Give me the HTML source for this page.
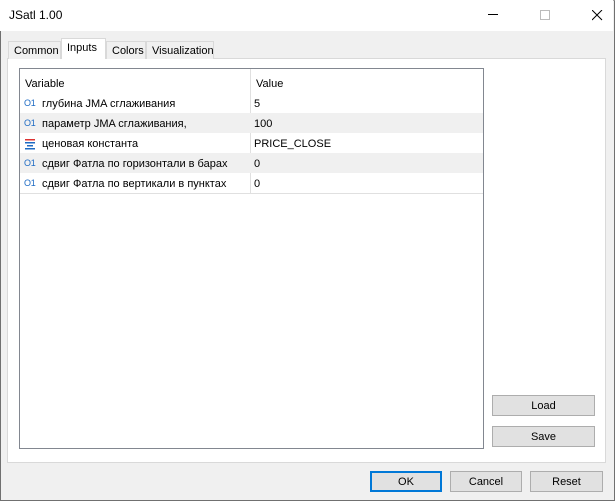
<!DOCTYPE html>
<html><head><meta charset="utf-8"><style>
*{margin:0;padding:0;box-sizing:border-box}
body{width:615px;height:501px;overflow:hidden;background:#f0f0f0;font-family:"Liberation Sans","Noto Sans CJK SC",sans-serif;font-size:11px;color:#000;position:relative}
.win{position:absolute;left:0;top:0;width:615px;height:501px;border:1px solid #707070;border-top:1px solid #aaa}
.title{position:absolute;left:0;top:0;width:613px;height:31px;background:#fff}
.title span{position:absolute;left:9px;top:8px;font-size:12px}
.abs{position:absolute}
.tab{position:absolute;top:41px;height:18px;border:1px solid #d9d9d9;border-bottom:none;background:#f0f0f0;padding:3px 5px 0;font-size:11px}
.panel{position:absolute;left:7px;top:58px;width:599px;height:405px;background:#fff;border:1px solid #d9d9d9}
.tbl{position:absolute;left:19px;top:68px;width:465px;height:381px;border:1px solid #828790;background:#fff}
.row{position:absolute;left:0;width:463px;height:20px}
.row.g{background:#f0f0f0}
.c1{position:absolute;left:22px;top:5px;white-space:nowrap}
.c2{position:absolute;left:234px;top:5px}
.ic{position:absolute;left:4px;top:5px;color:#1e6bc4;font-size:9px;letter-spacing:-.3px}
.vline{position:absolute;left:230px;top:0;width:1px;height:124px;background:#e0e0e0}
.btn{position:absolute;height:21px;background:#e1e1e1;border:1px solid #adadad;text-align:center;line-height:21px;font-size:11px}
</style></head><body>
<div class="win"></div>
<div class="title"><span>JSatl 1.00</span>
<div class="abs" style="left:488px;top:14px;width:10px;height:1px;background:#000"></div>
<div class="abs" style="left:540px;top:10px;width:10px;height:10px;border:1px solid #bbb"></div>
<svg class="abs" style="left:592px;top:10px" width="11" height="11"><path d="M0 0L10 10M10 0L0 10" stroke="#000" stroke-width="1"/></svg>
</div>
<div class="panel"></div>
<div class="tab" style="left:8px;width:53px">Common</div>
<div class="tab" style="left:61px;top:38px;height:21px;width:45px;background:#fff;border-color:#d9d9d9;padding-top:3px">Inputs</div>
<div class="tab" style="left:106px;width:40px">Colors</div>
<div class="tab" style="left:146px;width:68px">Visualization</div>
<div class="tbl">
<div class="vline"></div>
<div class="row" style="top:3px;height:21px"><span class="c1" style="left:5px;top:6px">Variable</span><span class="c2" style="left:236px;top:6px">Value</span></div>
<div class="row" style="top:24px"><span class="ic">O1</span><span class="c1">глубина JMA сглаживания</span><span class="c2">5</span></div>
<div class="row g" style="top:44px"><span class="ic">O1</span><span class="c1">параметр JMA сглаживания,</span><span class="c2">100</span></div>
<div class="row" style="top:64px"><svg class="abs" style="left:5px;top:5px" width="10" height="12"><rect x="0" y="1" width="10" height="1.5" fill="#d33"/><rect x="0" y="4" width="10" height="1.5" fill="#1e6bc4"/><rect x="2" y="7" width="6" height="1.5" fill="#1e6bc4"/><rect x="0" y="10" width="10" height="1.5" fill="#1e6bc4"/></svg><span class="c1">ценовая константа</span><span class="c2">PRICE_CLOSE</span></div>
<div class="row g" style="top:84px"><span class="ic">O1</span><span class="c1">сдвиг Фатла по горизонтали в барах</span><span class="c2">0</span></div>
<div class="row" style="top:104px;border-bottom:1px solid #e0e0e0;height:21px"><span class="ic">O1</span><span class="c1">сдвиг Фатла по вертикали в пунктах</span><span class="c2">0</span></div>
</div>
<div class="btn" style="left:492px;top:395px;width:103px">Load</div>
<div class="btn" style="left:492px;top:426px;width:103px">Save</div>
<div class="btn" style="left:370px;top:471px;width:72px;border:2px solid #0078d7;line-height:19px">OK</div>
<div class="btn" style="left:450px;top:471px;width:72px">Cancel</div>
<div class="btn" style="left:530px;top:471px;width:73px">Reset</div>
</body></html>
